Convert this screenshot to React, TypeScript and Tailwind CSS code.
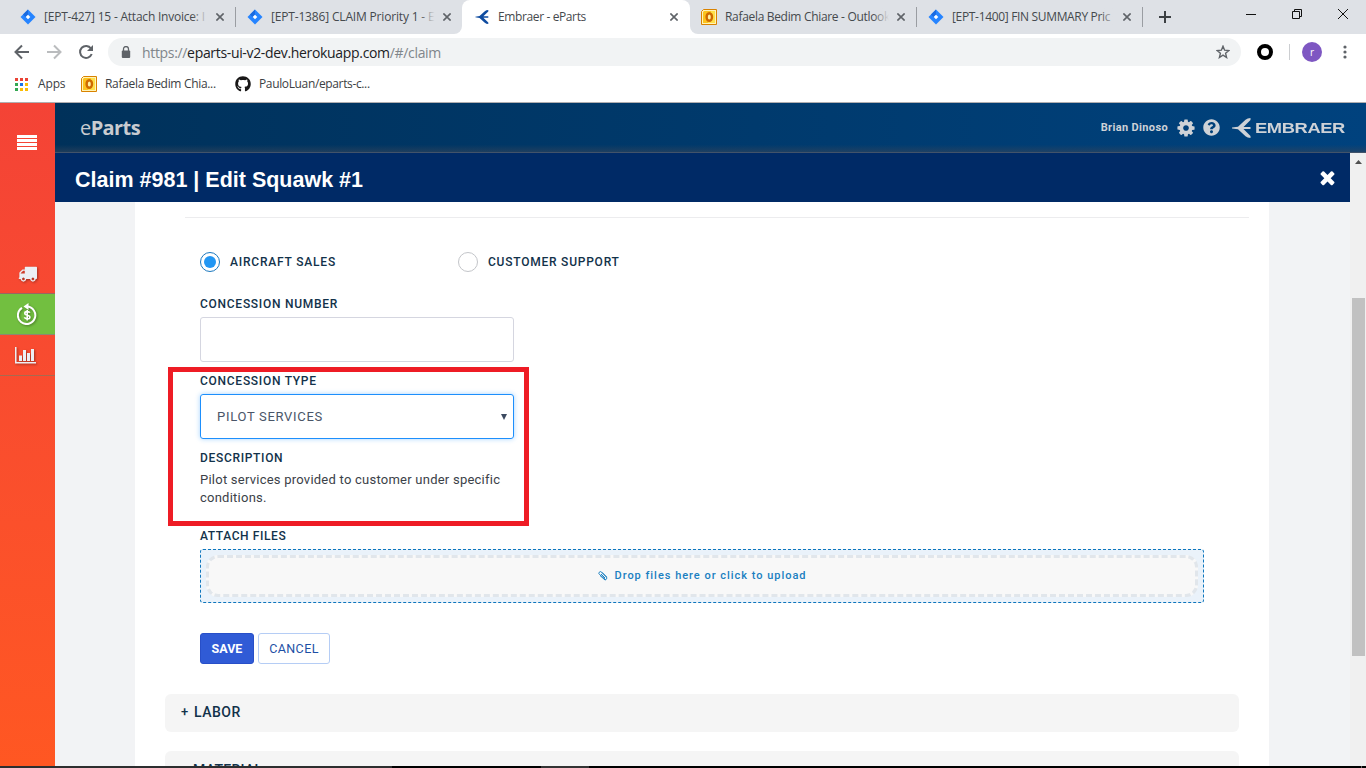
import React from 'react';
import { FaGithub, FaQuestionCircle } from 'react-icons/fa';

const COG = 'M1152 896q0-106-75-181t-181-75-181 75-75 181 75 181 181 75 181-75 75-181zm512-109v222q0 12-8 23t-20 13l-185 28q-19 54-39 91 35 50 107 138 10 12 10 25t-9 23q-27 37-99 108t-94 71q-12 0-26-9l-138-108q-44 23-91 38-16 136-29 186-7 28-36 28h-222q-14 0-24.5-8.5t-11.5-21.5l-28-184q-49-16-90-37l-141 107q-10 9-25 9-14 0-25-11-126-114-165-168-7-10-7-23 0-12 8-23 15-21 51-66.5t54-70.5q-27-50-41-99l-183-27q-13-2-21-12.5t-8-23.5v-222q0-12 8-23t19-13l186-28q14-46 39-92-40-57-107-138-10-12-10-24 0-10 9-23 26-36 98.5-107.5t94.5-71.5q13 0 26 10l138 107q44-23 91-38 16-136 29-186 7-28 36-28h222q14 0 24.5 8.5t11.5 21.5l28 184q49 16 90 37l142-107q9-9 24-9 13 0 25 10 129 119 165 170 7 8 7 22 0 12-8 23-15 21-51 66.5t-54 70.5q26 50 41 98l183 28q13 2 21 12.5t8 23.5z';
const TIMES = 'M1490 1322q0 40-28 68l-136 136q-28 28-68 28t-68-28l-294-294-294 294q-28 28-68 28t-68-28l-136-136q-28-28-28-68t28-68l294-294-294-294q-28-28-28-68t28-68l136-136q28-28 68-28t68 28l294 294 294-294q28-28 68-28t68 28l136 136q28 28 28 68t-28 68l-294 294 294 294q28 28 28 68z';
const TRUCK = 'M640 1408q0-52-38-90t-90-38-90 38-38 90 38 90 90 38 90-38 38-90zm-384-512h384v-256h-158q-13 0-22 9l-195 195q-9 9-9 22v30zm1280 512q0-52-38-90t-90-38-90 38-38 90 38 90 90 38 90-38 38-90zm256-1088v1024q0 15-4 26.5t-13.5 18.5-16.5 11.5-23.5 6-22.5 2-25.5 0-22.5-.5q0 106-75 181t-181 75-181-75-75-181h-384q0 106-75 181t-181 75-181-75-75-181h-64q-3 0-22.5.5t-25.5 0-22.5-2-23.5-6-16.5-11.5-13.5-18.5-4-26.5q0-26 19-45t45-19v-320q0-8-.5-35t0-38 2.5-34.5 6.5-37 14-30.5 22.5-30l198-198q19-19 50.5-32t58.5-13h160v-192q0-26 19-45t45-19h1024q26 0 45 19t19 45z';

function Solid({ d, className }: { d: string; className: string }) {
  return (
    <svg viewBox="0 0 1792 1792" className={className} fill="currentColor">
      <path d={d} />
    </svg>
  );
}

function JiraIcon() {
  return (
    <svg viewBox="0 0 16 16" className="size-4 shrink-0">
      <path d="M8 .5 15.500 8 8 15.500 .5 8z" fill="#2684ff" />
      <path d="M8 .5v5L5.500 8 3 5.500z" fill="#1a6ae0" />
      <path d="M8 5.700 10.300 8 8 10.300 5.700 8z" fill="#fff" />
    </svg>
  );
}

function OutlookIcon() {
  return (
    <svg viewBox="0 0 16 16" className="size-4 shrink-0">
      <path d="M2.500 .5h13v15H.5v-13z" fill="#fff3b8" stroke="#d98200" />
      <path d="M3 2h11v12H2V3z" fill="#fcc31e" />
      <path d="M10 2h4v12H7z" fill="#ffe04a" />
      <ellipse cx="8.300" cy="8" rx="2.700" ry="3.800" fill="#fff0a0" stroke="#cf6a00" strokeWidth="2.400" />
    </svg>
  );
}

function SwallowIcon({ className }: { className: string }) {
  return (
    <svg viewBox="0 0 19 20" className={className} fill="currentColor">
      <path d="M0 9.500 6 8.700 13.500 1.800Q15.500 0 18.500 0V2L11.500 9H18.500V11H11.500L18.500 18V20Q15.500 20 13.500 18.200L6 11.300 0 10.500z" />
    </svg>
  );
}

function SmallClose() {
  return (
    <svg viewBox="0 0 8 8" className="size-2 shrink-0" stroke="#5f6368" strokeWidth="1.600">
      <path d="M.4.4 7.600 7.600M7.600.4.4 7.600" />
    </svg>
  );
}

const chromeFont = "font-['Open_Sans',sans-serif]";

function Tab({ icon, title, width, textClass, closeClass, fade }: { icon: React.ReactNode; title: string; width: string; textClass: string; closeClass: string; fade?: boolean }) {
  return (
    <div className={`flex items-center ${width}`}>
      {icon}
      <div className={`relative ml-2 h-5 w-[164px] shrink-0 overflow-hidden whitespace-nowrap text-[12px] leading-5 text-[#45494d] ${textClass}`}>
        {title}
        {fade && <span className="absolute inset-y-0 right-0 w-4 bg-linear-to-r from-transparent to-[#dee1e6]" />}
      </div>
      <div className={closeClass}><SmallClose /></div>
    </div>
  );
}

function BrowserBar() {
  return (
    <div className={`h-[103px] shrink-0 border-b border-[#b0aeb0] bg-white ${chromeFont}`}>
      <div className="flex h-[34px] bg-[#dee1e6]">
        <div className="ml-5 flex"><Tab icon={<JiraIcon />} title="[EPT-427] 15 - Attach Invoice: I" width="w-[215px]" textClass="tracking-[-0.22px]" closeClass="ml-2" fade /></div>
        <div className="mt-[7px] h-5 w-px bg-[#9a9da2]" />
        <div className="flex pl-[11px]"><Tab icon={<JiraIcon />} title="[EPT-1386] CLAIM Priority 1 - E" width="w-[207px]" textClass="tracking-[-0.17px]" closeClass="ml-2" fade /></div>
        <div className="flex w-2 items-end bg-white"><div className="size-full rounded-br-lg bg-[#dee1e6]" /></div>
        <div className="w-[228px] bg-[#dee1e6]">
          <div className="flex h-full rounded-t-lg bg-white pl-[13px]">
            <Tab icon={<SwallowIcon className="mr-px size-[14px] shrink-0 text-[#0f4ca0]" />} title="Embraer - eParts" width="w-[215px]" textClass="tracking-[-0.38px]" closeClass="ml-2" />
          </div>
        </div>
        <div className="w-2 bg-white"><div className="size-full rounded-bl-lg bg-[#dee1e6]" /></div>
        <div className="flex pl-[3px]"><Tab icon={<OutlookIcon />} title="Rafaela Bedim Chiare - Outlook" width="w-[215px]" textClass="tracking-[-0.32px]" closeClass="ml-2" fade /></div>
        <div className="mt-[7px] h-5 w-px bg-[#9a9da2]" />
        <div className="flex pl-[11px]"><Tab icon={<JiraIcon />} title="[EPT-1400] FIN SUMMARY Pric" width="w-[214px]" textClass="tracking-[-0.33px]" closeClass="ml-[7px]" fade /></div>
        <div className="mt-[7px] h-5 w-px bg-[#9a9da2]" />
        <svg viewBox="0 0 12 12" className="mt-[11px] ml-4 size-3" stroke="#3c4043" strokeWidth="2"><path d="M6 0v12M0 6h12" /></svg>
        <svg viewBox="0 0 104 12" className="mt-2 mr-[17px] ml-auto h-3 w-[104px]" fill="none" stroke="#111">
          <path d="M1 6.500h10M47.500 3.500h7v7h-7zM49.500 3V1.500h7v7H55M93 1l10 10M103 1 93 11" />
        </svg>
      </div>
      <div className="flex h-9 items-center">
        <svg viewBox="0 0 80 16" className="ml-[14px] h-4 w-20" fill="none" stroke="#5f6368" strokeWidth="2">
          <path d="M15 8H2.500M8 1.500 1.500 8 8 14.500" />
          <path d="M33 8h12.500M40 1.500 46.500 8 40 14.500" stroke="#babcbe" />
          <path d="M77 4.500A6 6 0 1 0 77.700 10" />
          <path d="M79 1v6h-6z" fill="#5f6368" stroke="none" />
        </svg>
        <div className="ml-[14px] flex h-7 w-[1133px] items-center rounded-full bg-[#f1f3f4] pl-[13px] pr-[11px]">
          <svg viewBox="0 0 10 12" className="h-3 w-[10px]"><rect x=".8" y="4.500" width="8.400" height="7.500" rx="1" fill="#5f6368" /><path d="M2.500 5V3a2.500 2.500 0 0 1 5 0v2" fill="none" stroke="#5f6368" strokeWidth="1.300" /></svg>
          <span className="ml-[11px] text-[14px] tracking-[-0.33px] text-[#80868b]"><span>https://</span><span className="text-[#202124]">eparts-ui-v2-dev.herokuapp.com</span><span>/#/claim</span></span>
          <svg viewBox="0 0 14 14" className="ml-auto size-[14px]" fill="none" stroke="#5f6368" strokeWidth="1.400"><path d="m7 1.200 1.600 4 4.300.3-3.300 2.800 1 4.200L7 10.200l-3.600 2.300 1-4.200L1.100 5.500l4.300-.3z" /></svg>
        </div>
        <div className="ml-4 size-4 rounded-full border-[4.5px] border-black" />
        <div className="ml-4 h-4 w-px bg-[#ccced1]" />
        <div className="ml-3 flex size-5 items-center justify-center rounded-full bg-[#7e57c2] text-[10px] text-white">r</div>
        <svg viewBox="0 0 4 14" className="ml-[21px] h-[14px] w-1" fill="#5f6368"><circle cx="2" cy="2" r="1.600" /><circle cx="2" cy="7" r="1.600" /><circle cx="2" cy="12" r="1.600" /></svg>
      </div>
      <div className="flex h-7 items-center pl-[15px] text-[12px] tracking-[-0.32px] text-[#3c4043]">
        <svg viewBox="0 0 13 13" className="size-[13px]">
          <path d="M0 0h3v3H0zM5 0h3v3H5zM10 0h3v3h-3z" fill="#ea4335" />
          <path d="M0 5h3v3H0z" fill="#34a853" /><path d="M5 5h3v3H5z" fill="#1a73e8" /><path d="M10 5h3v3h-3zM5 10h3v3H5zM10 10h3v3h-3z" fill="#fbbc04" /><path d="M0 10h3v3H0z" fill="#34a853" />
        </svg>
        <span className="ml-[10px] w-[43px] tracking-[-0.15px]">Apps</span>
        <OutlookIcon />
        <span className="ml-2 w-[130px] whitespace-nowrap">Rafaela Bedim Chia...</span>
        <FaGithub className="size-4 text-[#181717]" />
        <span className="ml-2 whitespace-nowrap tracking-[-0.36px]">PauloLuan/eparts-c...</span>
      </div>
    </div>
  );
}

function Sidebar() {
  return (
    <div className="w-[55px] shrink-0 bg-linear-to-b from-[#f44336] to-[#ff5722] text-[#eceff4]">
      <div className="flex h-[151px] justify-center pt-8">
        <svg viewBox="0 0 20 15" className="-ml-px h-[15px] w-5" fill="#fff"><path d="M0 0h20v3H0zM0 4h20v3H0zM0 8h20v3H0zM0 12h20v3H0z" /></svg>
      </div>
      <div className="flex h-10 items-center justify-center border-b border-[#9a6660]">
        <Solid d={TRUCK} className="-ml-px size-[19px] drop-shadow-[1px_1px_1px_rgba(0,0,0,.35)]" />
      </div>
      <div className="flex h-[41px] items-center justify-center border-b border-[#8a8a70] bg-[#72bf40]">
        <svg viewBox="0 0 20 22" className="mr-px h-[22px] w-5 drop-shadow-[1px_1px_1px_rgba(0,0,0,.35)]" fill="none" stroke="#fff" strokeWidth="2">
          <path d="M5 4.900A8.700 8.700 0 1 0 10 3.600" />
          <path d="M11.500 0v7L6.500 3.500z" fill="#fff" stroke="none" />
          <path d="M12.800 9.700Q12.400 8.600 10.200 8.600 7.800 8.600 7.800 10.200 7.800 11.700 10.200 12.200 12.900 12.700 12.900 14.200 12.900 15.900 10.300 15.900 7.900 15.900 7.400 14.300M10.200 7v10.500" strokeWidth="1.600" />
        </svg>
      </div>
      <div className="flex h-[41px] items-center justify-center border-b border-[#a86a50]">
        <svg viewBox="0 0 22 17" className="-ml-[3px] h-[17px] w-[22px] drop-shadow-[1px_1px_1px_rgba(0,0,0,.35)]" fill="currentColor"><path d="M0 0h1.500v15H21v1.500H0zM4 8.500h3V14H4zM8 3h3v11H8zM12 6h3v8h-3zM16 2h3v12h-3z" /></svg>
      </div>
    </div>
  );
}

function Header() {
  return (
    <div className="h-[50px] shrink-0 bg-linear-to-r from-[#00315a] to-[#00427e] text-[#ced2d7]">
      <div className="flex h-full items-center border-b border-[#42536a] bg-linear-to-b from-transparent from-85% to-[#33445a]/60 pr-[20px] pl-[25px]">
        <div className="font-['Open_Sans',sans-serif] text-[20px] tracking-[-0.6px] text-[#c9ccd0]"><span>e</span><span className="font-bold">Parts</span></div>
        <div className="mt-0.5 ml-auto font-['Roboto',sans-serif] text-[11px] font-bold tracking-[0.35px]">Brian Dinoso</div>
        <Solid d={COG} className="ml-[8px] size-5" />
        <FaQuestionCircle className="ml-[7px] size-[17px]" />
        <SwallowIcon className="ml-3 h-5 w-[19px]" />
        <div className="ml-1 w-[91px]">
          <div className="w-max origin-left scale-x-[1.31] font-['Liberation_Sans',Arial,sans-serif] text-[14px] leading-5 font-bold tracking-[-0.3px]">EMBRAER</div>
        </div>
      </div>
    </div>
  );
}

const label = 'text-[12px] leading-[18px] font-medium text-[#12324a]';

function SquawkForm() {
  return (
    <div className="relative h-[564px] flex-none overflow-hidden bg-white px-[30px]">
      <div className="mt-[15px] -mr-[10px] ml-5 h-px bg-[#ececee]" />
      <div className="pl-[35px]">
        <div className="mt-[34px] flex h-5 items-center">
          <div className="flex size-5 items-center justify-center rounded-full border border-[#1b78be]"><div className="size-3 rounded-full bg-[#2196f3]" /></div>
          <span className={`ml-[10px] w-[228px] tracking-[0.8px] ${label}`}>AIRCRAFT SALES</span>
          <div className="size-5 rounded-full border border-[#c3c5c9]" />
          <span className={`ml-[10px] tracking-[0.77px] ${label}`}>CUSTOMER SUPPORT</span>
        </div>
        <div className={`mt-[23px] tracking-[0.73px] ${label}`}>CONCESSION NUMBER</div>
        <div className="mt-[4px] h-[45px] w-[314px] rounded-[3px] border border-[#d5d6e0]" />
        <div className={`mt-[10px] tracking-[0.73px] ${label}`}>CONCESSION TYPE</div>
        <div className="mt-[4px] flex h-[45px] w-[314px] items-center justify-between rounded-[3px] border border-[#1d8ffc] pr-[6px] pl-4 shadow-[0_0_5px_rgba(30,144,255,0.4)]">
          <span className="text-[13px] tracking-[0.7px] text-[#4a5568]">PILOT SERVICES</span>
          <svg viewBox="0 0 6 6" className="size-[6px]" fill="#3c4a60"><path d="M0 0h6L3 6z" /></svg>
        </div>
        <div className={`mt-[10px] tracking-[0.68px] ${label}`}>DESCRIPTION</div>
        <div className="mt-[4px] w-[310px] text-[13px] leading-[18px] tracking-[0.24px] text-[#3b4148]">Pilot services provided to customer under specific<br />conditions.</div>
        <div className={`mt-[20px] tracking-[0.6px] ${label}`}>ATTACH FILES</div>
        <div className="mt-[4px] h-[54px] w-[1004px] rounded-[3px] border border-dashed border-[#0e76bd] bg-[#eaf2fa] p-[5px]">
          <div className="flex h-[42px] items-center justify-center rounded-[12px] border-[3px] border-dashed border-[#e1e6eb] bg-[#f8f8f8] pl-px text-[11px] font-medium tracking-[0.98px] text-[#1a7fc1]">
            <svg viewBox="0 0 10 10" className="mr-[6px] size-[10px]" fill="none" stroke="currentColor" strokeWidth="1"><path d="m7.500 8.500-6-5a1.500 1.500 0 0 1 2-2.500l5 5a2 2 0 0 1-1.500 3L2 4.500M3 3l4 4M4 1.500 8.500 6" /></svg>
            <span>Drop files here or click to upload</span>
          </div>
        </div>
        <div className="mt-[30px] flex gap-1 text-[12px]">
          <div className="flex h-[31px] w-[54px] items-center justify-center rounded-[3px] border border-[#284fc8] bg-[#305bd6] pt-px text-[12.5px] font-bold text-white">SAVE</div>
          <div className="flex h-[31px] w-[72px] items-center justify-center rounded-[3px] border border-[#b5cdf5] pt-px text-[12.5px] tracking-[0.4px] text-[#1d4fa5]">CANCEL</div>
        </div>
      </div>
      <div className="mt-[30px] flex h-[38px] items-center rounded-[6px] bg-[#f5f5f5] pb-0.5 pl-4 text-[14px] font-medium tracking-[0.5px] text-[#12324a]"><span className="w-[13px] text-[13px]">+</span><span>LABOR</span></div>
      <div className="mt-[19px] flex h-[38px] rounded-[6px] bg-[#f5f5f5] pt-[9px] pl-4 text-[14px] leading-5 font-medium tracking-[0.3px] text-[#12324a]"><span className="w-3 text-[13px]">+</span><span>MATERIAL</span></div>
      <div className="absolute top-[165px] left-[33px] h-[159px] w-[361px] border-[5px] border-[#ee1c25]" />
    </div>
  );
}

export default function App() {
  return (
    <div className="flex h-[768px] w-[1366px] flex-col overflow-hidden bg-white">
      <BrowserBar />
      <div className="flex h-[663px] font-['Roboto',sans-serif]">
        <Sidebar />
        <div className="flex min-w-0 flex-1 flex-col">
          <Header />
          <div className="flex min-h-0 flex-1">
            <div className="flex min-w-0 flex-1 flex-col bg-[#f2f3f5]">
              <div className="flex h-[49px] shrink-0 items-center justify-between bg-[#002a66] pt-[4px] pr-[12px] pl-[20px] font-['Liberation_Sans',Arial,sans-serif] text-[21.5px] font-bold text-white">
                <span className="pt-0.5">Claim #981 | Edit Squawk #1</span>
                <Solid d={TIMES} className="-mt-1 size-[21px]" />
              </div>
              <div className="pr-[81px] pl-[80px]"><SquawkForm /></div>
            </div>
            <div className="w-4 bg-[#f0f0f0] pt-[7px] pl-0.5">
              <svg viewBox="0 0 7 4" className="ml-[3px] h-1 w-[7px]" fill="#505050"><path d="M0 4h7L3.500 0z" /></svg>
              <div className="mt-[134px] h-[358px] w-[13px] bg-[#c1c1c1]" />
            </div>
          </div>
        </div>
      </div>
      <div className="flex h-0.5 shrink-0 bg-black">
        <div className="w-[392px] bg-[#2d2e2f]" />
        <div className="ml-[149px] w-12 bg-[#333]" />
        <div className="ml-auto mr-1 w-px bg-[#666]" />
      </div>
    </div>
  );
}
